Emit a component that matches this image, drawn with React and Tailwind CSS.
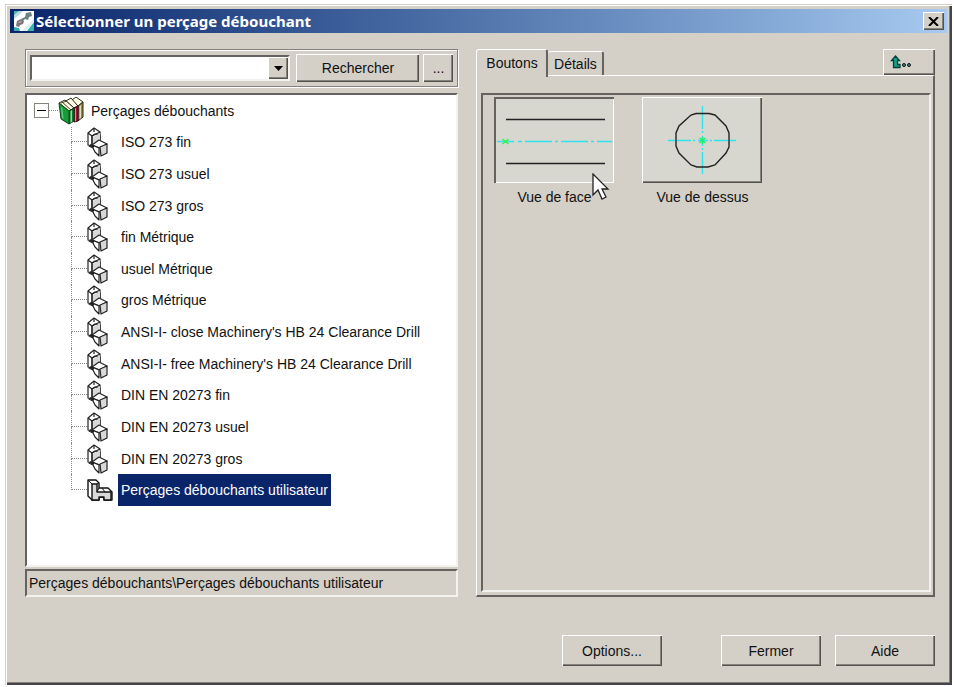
import React, { useState } from 'react';

const RAISED = 'bg-[#d4d0c8] shadow-[inset_1px_1px_0_#fff,inset_-1px_-1px_0_#55524e,inset_-2px_-2px_0_#85827c]';
const SUNKEN = 'border-2 border-t-[#66635f] border-l-[#66635f] border-r-[#f4f2ee] border-b-[#f4f2ee]';

const ITEMS = [
    'ISO 273 fin',
    'ISO 273 usuel',
    'ISO 273 gros',
    'fin Métrique',
    'usuel Métrique',
    'gros Métrique',
    "ANSI-I- close Machinery's HB 24 Clearance Drill",
    "ANSI-I- free Machinery's HB 24 Clearance Drill",
    'DIN EN 20273 fin',
    'DIN EN 20273 usuel',
    'DIN EN 20273 gros',
    'Perçages débouchants utilisateur',
];

function AppIcon() {
    return (
        <svg width="20" height="20" viewBox="0 0 20 20" aria-hidden="true">
            <rect width="20" height="20" fill="#fff" />
            <path d="M0 0h9L5 4 0 8z" fill="#bcd9de" />
            <path d="M0 0h5L0 4z" fill="#4fb4b8" />
            <path d="M12 2l5-1 1 4-3 1-1 3-3-1-2 2-2-2 4-2z" fill="#6c8284" />
            <path d="M3 10l4-2 3 2-1 3-3 1-1 2-3-1z" fill="#77747a" />
            <path d="M4 11l3-1 1 1-3 1z" fill="#c9a9a9" />
            <path d="M13 20l7-9v9z" fill="#35b3b1" />
            <path d="M0 16l5 1 1 3H0z" fill="#35a9ab" />
            <path d="M8 20L20 8v3l-8 9z" fill="#dceff0" />
        </svg>
    );
}

function BooksIcon() {
    return (
        <svg width="26" height="28" viewBox="0 0 26 28" className="shrink-0" aria-hidden="true" strokeLinejoin="round">
            {/* olive book */}
            <path d="M14 3l4-3 7 5-5 4z" fill="#fffbe6" stroke="#2a2a20" />
            <path d="M20 9l5-4v15l-5 4z" fill="#8d8a45" stroke="#2a2a20" />
            <path d="M21.500 9l1.500-1v13l-1.500 1z" fill="#e4e1b4" />
            {/* red book */}
            <path d="M8 4l5-3 7 8-4 2z" fill="#fff6e6" stroke="#2a2a20" />
            <path d="M16 11l4-2v15l-4 1z" fill="#a5123c" stroke="#3a0a18" />
            <path d="M17 11.500l1-.5v13l-1 .5z" fill="#e48aa2" />
            {/* green book */}
            <path d="M1 6l6-3 9 8-5 3z" fill="#fffbe6" stroke="#22301e" />
            <path d="M4 5l9 8M3 6l6-2" stroke="#5a4a20" fill="none" />
            <path d="M11 14l5-3v13l-5 3z" fill="#0d7a2b" stroke="#0a3a14" />
            <path d="M12.500 14l1.500-1v12l-1.500 1z" fill="#8fd8a0" />
            <path d="M1 6l10 8v13l-8-5z" fill="#179a38" stroke="#0a4a1a" />
            <path d="M3 10l1.500 1 1 11-1.500-1z" fill="#5ccb7c" />
        </svg>
    );
}

function PartIcon() {
    return (
        <svg width="22" height="30" viewBox="0 0 22 30" className="shrink-0" aria-hidden="true" stroke="#222" strokeWidth="1.2" strokeLinejoin="round">
            <path d="M1 6l6-5 6 4v8l-7 6-5-1z" fill="#fff" />
            <path d="M5 9l3-2 5 1v7l-8 4z" fill="#fff" />
            <path d="M6 10l7-4v7l-7 4z" fill="#d8d8d8" stroke="none" />
            <path d="M1 6l4 3v8M5 9l8-4M7 1v4" fill="none" />
            <path d="M5 18l7-5 8 4-7 4z" fill="#fff" />
            <path d="M5 18l7 3v8l-4-4-2-4-4-2z" fill="#fff" />
            <path d="M13 20l7-3v9l-6 3z" fill="#d8d8d8" />
            <path d="M3 18l4 2" fill="none" strokeWidth="2" />
        </svg>
    );
}

function UserPartIcon() {
    return (
        <svg width="26" height="22" viewBox="0 0 26 22" className="shrink-0" aria-hidden="true" stroke="#111" strokeWidth="1.4" strokeLinejoin="round">
            <path d="M1 1h8l3 3v5h9l4 4v8H17v-3h-5v3H5l-4-4z" fill="#fff" />
            <path d="M5 5h5v8h14v8h-7v-3h-5v3H5z" fill="#d8d8d8" />
            <path d="M1 1l4 4M9 1l3 3-2 1M12 9l-2 4M15 9l3 4M21 9l4 4" fill="none" strokeWidth="1" />
        </svg>
    );
}

function FaceView() {
    return (
        <svg viewBox="0 0 120 86" className="block w-full" aria-hidden="true" fill="none">
            <path d="M12 22.5H111M12 66.5H111" stroke="#222" strokeWidth="1.4" />
            <path d="M3 44.5H20M24 44.5H28M31 44.5H58M61 44.5H64M67 44.5H94M97 44.5H100M103 44.5H118" stroke="#2fe3ec" strokeWidth="1.4" />
            <path d="M8.500 42l6 5M14.500 42l-6 5" stroke="#2ff04a" strokeWidth="1.4" />
        </svg>
    );
}

function TopView() {
    return (
        <svg viewBox="0 0 120 86" className="block w-full" aria-hidden="true" fill="none">
            <path d="M26 43.500H49M51 43.500h2M56 43.500H66M68 43.500h2M72 43.500H94" stroke="#2fe3ec" strokeWidth="1.4" />
            <path d="M60.500 9V32M60.500 34v2M60.500 39V49M60.500 51v2M60.500 55V77" stroke="#2fe3ec" strokeWidth="1.4" />
            <path d="M54 16.500H67L73 18 84 29l3 7V50l-3 6L73 68l-7 2H55l-6-2L37 56l-3-7V36l3-7L49 18z" stroke="#222" strokeWidth="1.400" />
            <path d="M57.500 41l6 5M63.500 41l-6 5M60.500 40v7" stroke="#1fee6a" strokeWidth="1.4" />
        </svg>
    );
}

function PushButton({ className, children, ...props }) {
    return (
        <button type="button" className={`flex items-center justify-center ${RAISED} ${className}`} {...props}>
            {children}
        </button>
    );
}

function TreeRow({ label, last, selected, onSelect }) {
    return (
        <li role="treeitem" aria-selected={selected} className="flex items-center pl-11">
            {/* branch lines */}
            <span className="flex h-full w-4 flex-col">
                <span className="h-1/2 border-b border-l border-dotted border-[#8a8a8a]" />
                {!last && <span className="flex-1 border-l border-dotted border-[#8a8a8a]" />}
            </span>
            <span className="w-[31px]">{last ? <UserPartIcon /> : <PartIcon />}</span>
            <button
                type="button"
                onClick={onSelect}
                className={`h-full whitespace-nowrap px-[3px] ${selected ? 'bg-[#0a246a] text-white' : ''}`}
            >
                {label}
            </button>
        </li>
    );
}

function ViewItem({ label, pressed, children, onClick }) {
    const id = label.replaceAll(' ', '-');
    return (
        <div className="relative w-[120px]">
            <button
                type="button"
                aria-labelledby={id}
                aria-pressed={pressed}
                onClick={onClick}
                className={`block w-full bg-[#d7d7d0] ${pressed
                    ? 'shadow-[inset_2px_2px_0_#66635f,inset_-1px_-1px_0_#fff]'
                    : 'shadow-[inset_1px_1px_0_#fff,inset_-1px_-1px_0_#55524e,inset_-2px_-2px_0_#85827c]'}`}
            >
                {children}
            </button>
            <p id={id} className="mt-1 text-center leading-5">{label}</p>
        </div>
    );
}

export default function App() {
    const [selected, setSelected] = useState(ITEMS.length - 1);
    const [view, setView] = useState('face');
    const [tab, setTab] = useState('boutons');

    return (
        <div className="flex min-h-screen bg-white pt-1 pr-[2px] pb-[2px] pl-[5px] font-['Liberation_Sans',Arial,sans-serif] text-sm text-[#111]">
            <div className="flex flex-1 flex-col bg-[#d4d0c8] p-[5px] shadow-[inset_1px_1px_0_#d4d0c8,inset_2px_2px_0_#fff,inset_-2px_-2px_0_#45444a,inset_-3px_-3px_0_#85827c]">

                {/* Title bar */}
                <header className="flex h-6 items-center gap-[2px] bg-linear-to-r from-[#0a246a] to-[#a6caf0] pr-[3px] pl-1">
                    <AppIcon />
                    <h1 className="flex-1 font-['Noto_Sans',sans-serif] text-[15px] leading-5 font-bold text-white">Sélectionner un perçage débouchant</h1>
                    <PushButton className="h-[18px] w-[21px]" aria-label="Fermer la fenêtre">
                        <svg width="11" height="9" viewBox="0 0 11 9" aria-hidden="true">
                            <path d="M1 0l9 9M10 0L1 9" stroke="#000" strokeWidth="2" />
                        </svg>
                    </PushButton>
                </header>

                <main className="grid flex-1 grid-cols-[433fr_458fr] gap-[18px] pt-4 pr-[12px] pl-[15px]">
                    {/* Search + tree */}
                    <section className="flex min-w-0 flex-col">
                        <div className="flex h-[38px] items-center gap-1 border border-[#85827c] px-1 shadow-[inset_1px_1px_0_#fff,1px_1px_0_#fff]">
                            <div className="relative mr-[2px] flex-1">
                                <select aria-label="Recherche" className={`block h-[26px] w-full appearance-none bg-white px-1 outline-none ${SUNKEN}`}>
                                    <option></option>
                                </select>
                                <span className={`pointer-events-none absolute top-[2px] right-[2px] flex h-[22px] w-5 items-center justify-center ${RAISED}`}>
                                    <svg width="9" height="5" viewBox="0 0 9 5" aria-hidden="true"><path d="M0 0h9L4.500 5z" /></svg>
                                </span>
                            </div>
                            <PushButton className="h-7 w-[123px]">Rechercher</PushButton>
                            <PushButton className="h-7 w-[30px]">...</PushButton>
                        </div>

                        <div className={`mt-[6px] flex-1 bg-white ${SUNKEN}`}>
                            <ul role="tree" aria-label="Perçages" className="grid h-[411px] grid-rows-13">
                                <li role="treeitem" aria-expanded="true" className="flex items-center pl-[7px]">
                                    <button type="button" aria-label="Réduire" className="flex h-[15px] w-[15px] items-center justify-center border border-[#85827c]">
                                        <span className="h-[1px] w-[9px] bg-black" />
                                    </button>
                                    <span className="w-[9px] border-t border-dotted border-[#8a8a8a]" />
                                    <BooksIcon />
                                    <span className="pl-[7px]">Perçages débouchants</span>
                                </li>
                                {ITEMS.map((label, i) => (
                                    <TreeRow
                                        key={label}
                                        label={label}
                                        last={i === ITEMS.length - 1}
                                        selected={selected === i}
                                        onSelect={() => setSelected(i)}
                                    />
                                ))}
                            </ul>
                        </div>

                        <p className={`mt-[2px] h-7 truncate px-[2px] leading-6 ${SUNKEN}`}>
                            Perçages débouchants\{ITEMS[selected]}
                        </p>
                    </section>

                    {/* Tabs + views */}
                    <section className="flex min-w-0 flex-col">
                        <div className="flex items-end">
                            <div role="tablist" className="flex items-end">
                                <button
                                    type="button"
                                    role="tab"
                                    aria-selected={tab === 'boutons'}
                                    onClick={() => setTab('boutons')}
                                    className="relative z-10 -mb-[2px] h-7 w-[72px] rounded-t-[3px] border-t border-r-2 border-l border-t-white border-r-[#66635f] border-l-white bg-[#d4d0c8] pb-[2px]"
                                >
                                    Boutons
                                </button>
                                <button
                                    type="button"
                                    role="tab"
                                    aria-selected={tab === 'details'}
                                    onClick={() => setTab('details')}
                                    className="h-6 w-14 rounded-t-[3px] border-t border-r-2 border-t-white border-r-[#66635f]"
                                >
                                    Détails
                                </button>
                            </div>
                            <PushButton className="ml-auto h-[26px] w-[52px] pr-4" aria-label="Niveau supérieur">
                                <svg width="22" height="14" viewBox="0 0 22 14" aria-hidden="true">
                                    <path d="M5.500 1l4 4.500H7.500v4h2.500v3H3.500v-7H1.500z" fill="#12a184" stroke="#063f38" strokeWidth="1.300" />
                                    <circle cx="14" cy="10" r="1.500" fill="#4a8a84" stroke="#111" />
                                    <circle cx="19" cy="10" r="1.500" fill="#4a8a84" stroke="#111" />
                                </svg>
                            </PushButton>
                        </div>

                        <div className="flex flex-1 flex-col border-t border-r-2 border-b-2 border-l border-t-white border-r-[#66635f] border-b-[#66635f] border-l-white pt-[17px] pr-[2px] pb-[3px] pl-1">
                            <div className={`flex flex-1 flex-wrap content-start gap-7 pt-[2px] pl-[11px] ${SUNKEN}`}>
                                <div className="relative">
                                    <ViewItem label="Vue de face" pressed={view === 'face'} onClick={() => setView('face')}>
                                        <FaceView />
                                    </ViewItem>
                                    {/* mouse pointer */}
                                    <svg width="18" height="30" viewBox="0 0 18 30" aria-hidden="true" className="pointer-events-none absolute top-[76px] left-[98px]">
                                        <path d="M1 1v21l5-5 4 9 4-2-4-8h6z" fill="#fff" stroke="#222" strokeWidth="1.300" />
                                    </svg>
                                </div>
                                <ViewItem label="Vue de dessus" pressed={view === 'dessus'} onClick={() => setView('dessus')}>
                                    <TopView />
                                </ViewItem>
                            </div>
                        </div>
                    </section>
                </main>

                {/* Dialog buttons */}
                <footer className="flex justify-end pt-[38px] pr-[12px] pb-[14px]">
                    <PushButton className="mr-[59px] h-[31px] w-[100px]">Options...</PushButton>
                    <PushButton className="mr-[14px] h-[31px] w-[100px]">Fermer</PushButton>
                    <PushButton className="h-[31px] w-[100px]">Aide</PushButton>
                </footer>
            </div>
        </div>
    );
}
